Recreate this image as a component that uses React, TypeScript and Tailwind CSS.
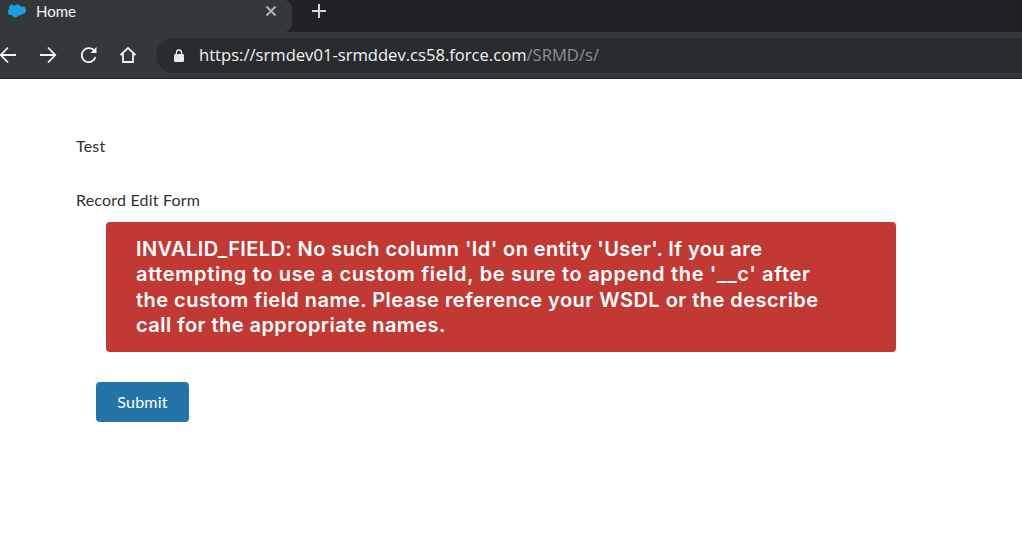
function SalesforceCloud() {
  return (
    <svg width="20" height="14" viewBox="0 0 20 14" className="shrink-0">
      <path
        d="M8 2.200C8.800 1.200 10 .6 11.300 .6c1.600 0 3 .9 3.700 2.200.6-.3 1.300-.4 1.900-.4C19 2.400 20 4.100 20 6.200s-1.400 3.900-3.300 3.900c-.3 0-.5 0-.8-.1-.5.9-1.400 1.500-2.500 1.500-.4 0-.8-.1-1.200-.3-.5 1.300-1.700 2.200-3 2.200-1.400 0-2.600-.9-3.100-2.200-.2 0-.4.1-.6.1C3.200 11.300 1.700 9.800 1.700 8c0-1.200.6-2.200 1.500-2.800C3 4.800 2.900 4.300 2.900 3.800 2.900 1.900 4.400.4 6.200.4c.7 0 1.300.7 1.800 1.800z"
        fill="#1b9fe0"
      />
    </svg>
  );
}

function TabBar() {
  return (
    <div className="flex h-8 bg-[#202124]">
      <div className="flex w-[292px] shrink-0 items-center rounded-tr-lg rounded-br-lg bg-[#35383b] pb-[10px] pl-[6px] pr-[15px]">
        <SalesforceCloud />
        <span className="ml-[10px] flex-grow text-[15px] text-[#f1f3f4]">Home</span>
        <svg width="12" height="12" viewBox="0 0 12 12" className="stroke-[#b4b7ba]" strokeWidth="1.800">
          <path d="M1.500 1.500l9 9M10.500 1.500l-9 9" />
        </svg>
      </div>
      <div className="ml-[19px] flex items-center pb-[10px]">
        <svg width="16" height="16" viewBox="0 0 16 16" className="stroke-[#d5d7d9]" strokeWidth="2">
          <path d="M8 1v14M1 8h14" />
        </svg>
      </div>
    </div>
  );
}

function Toolbar() {
  return (
    <div className="flex h-[47px] items-center overflow-hidden border-b border-[#202124] bg-[#35383b]">
      <div className="ml-[-1px] flex items-center pb-[1px] text-[#f1f3f4]">
        <svg width="19" height="18" viewBox="0 0 19 18" fill="none" stroke="currentColor" strokeWidth="1.800">
          <path d="M17 9H2M9 1.500L1.800 9 9 16.500" />
        </svg>
        <svg className="ml-[20px]" width="19" height="18" viewBox="0 0 19 18" fill="none" stroke="currentColor" strokeWidth="1.800">
          <path d="M2 9h15M10 1.500L17.200 9 10 16.500" />
        </svg>
        <svg className="ml-[23px]" width="18" height="18" viewBox="0 0 18 18" fill="none" stroke="currentColor" strokeWidth="1.800">
          <path d="M15.500 11a7 7 0 1 1-.8-5.600" />
          <path d="M16.500 1v6h-6z" fill="currentColor" stroke="none" />
        </svg>
        <svg className="ml-[21px]" width="18" height="18" viewBox="0 0 18 18" fill="none" stroke="currentColor" strokeWidth="1.800">
          <path d="M1.500 9L9 2l7.500 7M4 7.500V16h10V7.500" />
        </svg>
      </div>
      <div className="ml-[19px] flex h-[35px] flex-grow items-center rounded-l-[18px] bg-[#292c2f] pl-[18px] font-['Open_Sans',sans-serif] text-[16.600px]">
        <svg width="10" height="13" viewBox="0 0 10 13" fill="none">
          <path d="M2.500 6V3.500a2.500 2.500 0 0 1 5 0V6" stroke="#e8eaed" strokeWidth="1.300" />
          <rect x="0" y="5" width="10" height="8" rx="1.200" fill="#e8eaed" />
        </svg>
        <span className="ml-[15px] text-[#f1f3f4]">https://srmdev01-srmddev.cs58.force.com</span>
        <span className="text-[#8a9199]">/SRMD/s/</span>
      </div>
    </div>
  );
}

export default function App() {
  return (
    <div className="h-[554px] w-[1022px] overflow-hidden bg-white font-['Lato',sans-serif]">
      <TabBar />
      <Toolbar />

      <div className="pl-[76px] pt-[55px]">
        <div className="text-[16px] leading-[24px] tracking-[0.200px] text-[#32302e]">Test</div>
        <div className="mt-[30px] text-[16px] leading-[24px] tracking-[0.200px] text-[#32302e]">Record Edit Form</div>

        <div className="ml-[30px] mt-[10px] h-[130px] w-[790px] rounded-[4px] bg-[#c23934] py-[15px] pl-[30px] font-['Inter',sans-serif] text-[20px] font-semibold leading-[25.300px] text-white">
          <div className="tracking-[0.410px]">INVALID_FIELD: No such column 'Id' on entity 'User'. If you are</div>
          <div className="tracking-[0.680px]">attempting to use a custom field, be sure to append the '__c' after</div>
          <div className="tracking-[0.465px]">the custom field name. Please reference your WSDL or the describe</div>
          <div className="tracking-[0.460px]">call for the appropriate names.</div>
        </div>

        <button className="ml-[20px] mt-[30px] h-[40px] w-[93px] rounded-[4px] bg-[#2574a9] text-[16px] tracking-[0.200px] text-white">
          Submit
        </button>
      </div>
    </div>
  );
}
